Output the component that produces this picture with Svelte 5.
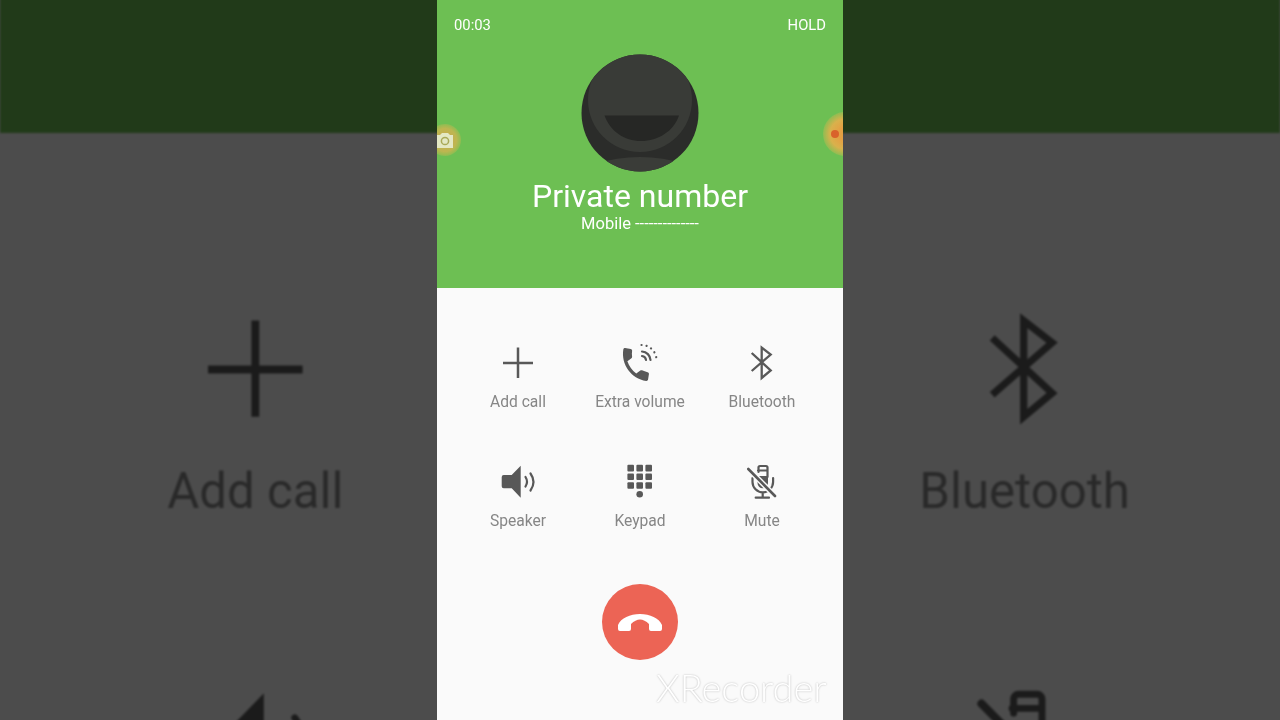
<script>
	const actions = [
		{ id: 'add', label: 'Add call', side: true },
		{ id: 'volume', label: 'Extra volume' },
		{ id: 'bluetooth', label: 'Bluetooth', side: true },
		{ id: 'speaker', label: 'Speaker' },
		{ id: 'keypad', label: 'Keypad' },
		{ id: 'mute', label: 'Mute' }
	];
	const keys = [0, 1, 2];
</script>

{#snippet icon(id)}
	<svg class="icon" viewBox="0 0 40 40" width="40" height="40">
		{#if id === 'add'}
			<path class="line" d="M20 4.500V35M5 20H35" />
		{:else if id === 'volume'}
			<path
				class="solid"
				transform="translate(-2.500 1) rotate(9 12 12) scale(1.620)"
				d="M6.620 10.790c1.440 2.830 3.760 5.140 6.590 6.590l2.200-2.200c.27-.27.67-.36 1.020-.24 1.120.37 2.330.57 3.570.57.55 0 1 .45 1 1V20c0 .55-.45 1-1 1-9.390 0-17-7.610-17-17 0-.55.45-1 1-1h3.500c.55 0 1 .45 1 1 0 1.250.2 2.450.57 3.570.11.35.03.74-.25 1.020l-2.200 2.200z"
			/>
			<path class="thin" d="M22 13A4.500 4.500 0 0 1 26 17" />
			<path class="thin" d="M22 8.500A9 9 0 0 1 30.500 17" />
			<path class="dots" d="M21.500 2A15 15 0 0 1 36.500 17" />
		{:else if id === 'bluetooth'}
			<path class="line miter" d="M9.700 10L28.700 27.500L19.700 35V4.500L28.700 11.500L9.700 28" />
		{:else if id === 'speaker'}
			<path class="solid" d="M22.700 3.700V35.700L13.700 26.300H5.700a2 2 0 0 1-2-2V15a2 2 0 0 1 2-2H13.700z" />
			<path class="thin" d="M27.500 15Q30.500 19.700 27.500 24.500" />
			<path class="thin" d="M32.500 11.500Q38.500 20 32.500 28.500" />
		{:else if id === 'keypad'}
			{#each keys as row}
				{#each keys as col}
					<rect class="solid" x={7.4 + col * 9} y={2.8 + row * 8.7} width="6.600" height="6.600" rx="1" />
				{/each}
			{/each}
			<circle class="solid" cx="19.700" cy="32.300" r="3.300" />
		{:else}
			<path class="thin" d="M16.500 10V5.500a1.500 1.500 0 0 1 1.500-1.500h6a1.500 1.500 0 0 1 1.500 1.500V15M16 8.500H25" />
			<path class="solid" d="M15.500 14H26V21a5.200 5.200 0 0 1-10.500 0z" />
			<path class="thin" d="M10.500 16V20a10.300 10.300 0 0 0 20.600 0V16M20.700 31V35.700M13.700 35.700H27" />
			<path class="gap" d="M6.300 7L33 34" />
			<path class="thin wide" d="M6.300 7L33 34" />
		{/if}
	</svg>
{/snippet}

{#snippet screen(mirror)}
	<div class="head">
		<div class="top">
			{#if !mirror}
				<span>00:03</span>
				<span>HOLD</span>
			{/if}
		</div>
		<svg class="avatar" viewBox="0 0 118 118" width="118" height="118">
			<defs>
				<clipPath id={mirror ? 'round-m' : 'round'}><circle cx="59" cy="59" r="58.500" /></clipPath>
			</defs>
			<g clip-path={mirror ? 'url(#round-m)' : 'url(#round)'}>
				<rect width="118" height="118" fill="#2b2c2a" />
				<ellipse cx="59" cy="126" rx="60" ry="23" fill="#3a3c38" />
				<circle cx="59" cy="46" r="52" fill="#393b37" />
				<path d="M23.500 61.500H98C93 77 77 87 60 87S29 77 23.500 61.500z" fill="#262725" />
			</g>
		</svg>
		<div class="name">{mirror ? '' : 'Private number'}</div>
		<div class="sub">{mirror ? '' : 'Mobile --------------'}</div>

		<div class="float camera">
			<svg viewBox="0 0 20 16" width="20" height="16">
				<path d="M-4 2H3L5 0H11L13 2H16V15H-4z" fill="#e4e8c4" />
				<circle cx="8" cy="8" r="3.600" fill="none" stroke="#a9a958" stroke-width="1.500" />
			</svg>
		</div>
		<div class="float record"><span class="dot"></span></div>
	</div>

	<div class="body">
		<div class="grid">
			{#each actions as a}
				<div class="action">
					{@render icon(a.id)}
					<span class="label">{!mirror || a.side ? a.label : ''}</span>
				</div>
			{/each}
		</div>
		<button class="end" aria-label="End call">
			<svg viewBox="0 0 44 17" width="44" height="17">
				<path
					fill="#fff"
					d="M0 11C3 4 12 0 22 0S41 4 44 11V15a2 2 0 0 1-2 2H33a2 2 0 0 1-2-2V10C28 7 25 5.500 22 5.500S16 7 13 10V15a2 2 0 0 1-2 2H2a2 2 0 0 1-2-2z"
				/>
			</svg>
		</button>
	</div>
{/snippet}

<main class="page">
	<div class="backdrop" aria-hidden="true">
		<div class="screen">{@render screen(true)}</div>
	</div>
	<div class="screen front">
		{@render screen(false)}
		<div class="watermark">XRecorder</div>
	</div>
</main>

<style>
	:global(body) {
		margin: 0;
		background: #4d4d4d;
	}

	.page {
		position: relative;
		display: flex;
		justify-content: center;
		width: 1280px;
		height: 720px;
		overflow: hidden;
		font-family: Roboto, "Liberation Sans", sans-serif;
	}

	.backdrop {
		position: absolute;
		left: 437px;
		top: 0;
		transform: scale(3.153);
		filter: blur(0.4px) brightness(0.305);
	}

	.screen {
		position: relative;
		display: flex;
		flex-direction: column;
		width: 406px;
		height: 720px;
		overflow: hidden;
		background: #fafafa;
	}

	.front {
		filter: blur(0.35px);
	}

	.head {
		position: relative;
		display: flex;
		flex-direction: column;
		align-items: center;
		height: 288px;
		background: #6dbf53;
		color: #fff;
		overflow: hidden;
	}

	.top {
		display: flex;
		justify-content: space-between;
		align-self: stretch;
		height: 17px;
		padding: 17px 17px 0;
		font-size: 14.800px;
		line-height: 17px;
	}

	.avatar {
		margin-top: 20px;
	}

	.name {
		height: 38px;
		margin-top: 5px;
		font-size: 32px;
		line-height: 38px;
	}

	.sub {
		height: 19px;
		margin-top: -1px;
		font-size: 16.500px;
		line-height: 19px;
	}

	.float {
		position: absolute;
		border-radius: 50%;
	}

	.camera {
		left: -8px;
		top: 124px;
		width: 32px;
		height: 32px;
		background: radial-gradient(circle closest-side, #c4af50 40%, #bdb650 72%, #8dbd52 100%);
	}

	.camera svg {
		position: absolute;
		left: 8px;
		top: 9px;
		overflow: visible;
	}

	.record {
		right: -24px;
		top: 112px;
		width: 44px;
		height: 44px;
		background: radial-gradient(circle closest-side, #e4a043 30%, #d9b14c 68%, #8fbd52 100%);
	}

	.dot {
		position: absolute;
		left: 8px;
		top: 18px;
		width: 8px;
		height: 8px;
		border-radius: 50%;
		background: #d9622b;
	}

	.body {
		display: flex;
		flex-direction: column;
		align-items: center;
		padding-top: 55px;
	}

	.grid {
		display: grid;
		grid-template-columns: repeat(3, 122px);
		row-gap: 50px;
	}

	.action {
		display: flex;
		flex-direction: column;
		align-items: center;
		gap: 9px;
		color: #868686;
		font-size: 15.600px;
		line-height: 20px;
	}

	.label {
		height: 20px;
	}

	.icon {
		overflow: visible;
	}

	.line {
		fill: none;
		stroke: #585858;
		stroke-width: 2.500;
	}

	.miter {
		stroke-width: 2.300;
		stroke-linejoin: miter;
	}

	.solid {
		fill: #585858;
	}

	.thin {
		fill: none;
		stroke: #585858;
		stroke-width: 2.200;
		stroke-linecap: round;
	}

	.wide {
		stroke-width: 2.600;
	}

	.gap {
		fill: none;
		stroke: #fafafa;
		stroke-width: 5.500;
	}

	.dots {
		fill: none;
		stroke: #585858;
		stroke-width: 2.200;
		stroke-linecap: round;
		stroke-dasharray: 0.100 5;
	}

	.end {
		display: flex;
		align-items: center;
		justify-content: center;
		width: 76px;
		height: 76px;
		margin-top: 53px;
		padding: 0;
		border: none;
		border-radius: 50%;
		background: #ec6455;
	}

	.watermark {
		position: absolute;
		left: 219px;
		top: 668px;
		font-family: Lato, sans-serif;
		font-size: 38px;
		font-weight: 300;
		line-height: 38px;
		color: #ffffff;
		text-shadow: 0 0 2px rgba(0, 0, 0, 0.28);
	}
</style>
